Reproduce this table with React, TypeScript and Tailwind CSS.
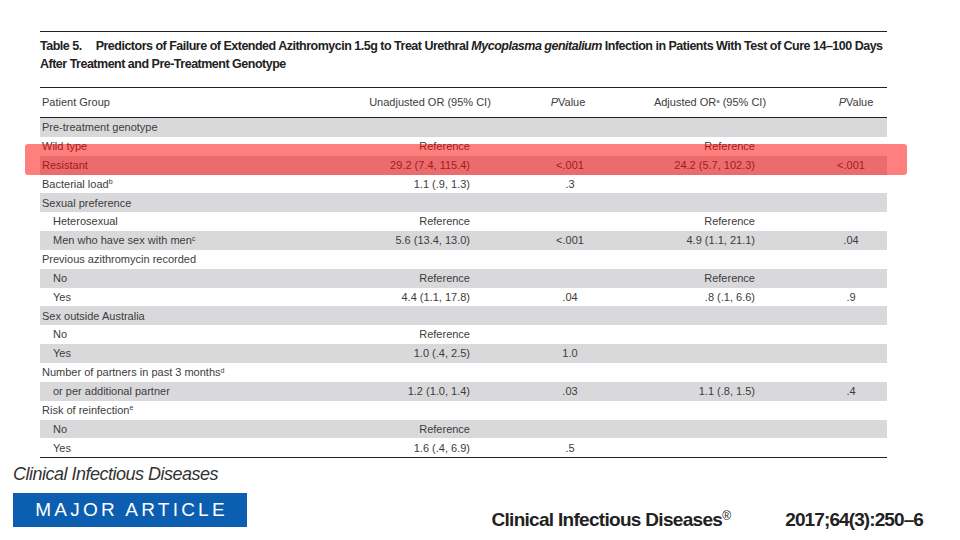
import React from 'react';

type Row = {
  label: React.ReactNode;
  indent?: boolean;
  unadj?: string;
  p1?: string;
  adj?: string;
  p2?: string;
};

const rows: Row[] = [
  { label: 'Pre-treatment genotype' },
  { label: 'Wild type', unadj: 'Reference', adj: 'Reference' },
  { label: 'Resistant', unadj: '29.2 (7.4, 115.4)', p1: '<.001', adj: '24.2 (5.7, 102.3)', p2: '<.001' },
  { label: <>Bacterial load<sup className="text-[7px]">b</sup></>, unadj: '1.1 (.9, 1.3)', p1: '.3' },
  { label: 'Sexual preference' },
  { label: 'Heterosexual', indent: true, unadj: 'Reference', adj: 'Reference' },
  { label: <>Men who have sex with men<sup className="text-[7px]">c</sup></>, indent: true, unadj: '5.6 (13.4, 13.0)', p1: '<.001', adj: '4.9 (1.1, 21.1)', p2: '.04' },
  { label: 'Previous azithromycin recorded' },
  { label: 'No', indent: true, unadj: 'Reference', adj: 'Reference' },
  { label: 'Yes', indent: true, unadj: '4.4 (1.1, 17.8)', p1: '.04', adj: '.8 (.1, 6.6)', p2: '.9' },
  { label: 'Sex outside Australia' },
  { label: 'No', indent: true, unadj: 'Reference' },
  { label: 'Yes', indent: true, unadj: '1.0 (.4, 2.5)', p1: '1.0' },
  { label: <>Number of partners in past 3 months<sup className="text-[7px]">d</sup></> },
  { label: 'or per additional partner', indent: true, unadj: '1.2 (1.0, 1.4)', p1: '.03', adj: '1.1 (.8, 1.5)', p2: '.4' },
  { label: <>Risk of reinfection<sup className="text-[7px]">e</sup></> },
  { label: 'No', indent: true, unadj: 'Reference' },
  { label: 'Yes', indent: true, unadj: '1.6 (.4, 6.9)', p1: '.5' },
];

export default function App() {
  return (
    <div className="relative w-[960px] h-[540px] overflow-hidden bg-white text-[#3c3c3c] font-['Liberation_Sans',Arial,sans-serif]">
      {/* table */}
      <div className="ml-[40px] w-[847px] pt-[31px]">
        <div className="border-t-[1.5px] border-[#222]" />
        <div className="pt-[5px] pb-[14px] text-[12.5px] leading-[18px] font-bold tracking-[-0.5px] text-[#222] whitespace-nowrap">
          <span>Table 5.</span>
          <span className="ml-[14px]">Predictors of Failure of Extended Azithromycin 1.5g to Treat Urethral </span>
          <i>Mycoplasma genitalium</i>
          <span> Infection in Patients With Test of Cure 14–100 Days</span>
          <br />
          After Treatment and Pre-Treatment Genotype
        </div>
        <div className="border-t border-[#222]" />

        {/* header */}
        <div className="grid grid-cols-[325px_130px_33px_80px_204px_13px_62px] h-[29px] items-center text-[11px] whitespace-nowrap">
          <div className="pl-[2px]">Patient Group</div>
          <div className="text-center">Unadjusted OR (95% CI)</div>
          <div />
          <div className="text-center"><i>P</i>Value</div>
          <div className="text-center">Adjusted OR<sup className="text-[6px]">a</sup> (95% CI)</div>
          <div />
          <div className="text-center"><i>P</i>Value</div>
        </div>
        <div className="border-t border-[#222]" />

        {/* body */}
        <div className="flex flex-col">
          {rows.map((r, i) => (
            <div
              key={i}
              className={`grid grid-cols-[340px_90px_200px_85px_60px_72px] h-[18.85px] items-center text-[11px] whitespace-nowrap ${
                i % 2 === 0 ? 'bg-[#d9d9db]' : 'bg-white'
              }`}
            >
              <div className={r.indent ? 'pl-[13px]' : 'pl-[2px]'}>{r.label}</div>
              <div className="text-right">{r.unadj}</div>
              <div className="text-center">{r.p1}</div>
              <div className="text-right">{r.adj}</div>
              <div />
              <div className="text-center">{r.p2}</div>
            </div>
          ))}
        </div>
        <div className="border-t-[1.5px] border-[#222]" />
      </div>

      {/* footer */}
      <div className="flex items-end justify-between">
        <div className="pl-[13px] pt-[5px]">
          <div className="italic text-[18px] leading-[22px] tracking-[-0.5px] text-[#333]">Clinical Infectious Diseases</div>
          <div className="mt-[8px] w-[234px] h-[34px] bg-[#0c5eb0] flex items-center justify-center">
            <span className="text-white text-[19px] tracking-[0.17em] pl-[3px]">MAJOR ARTICLE</span>
          </div>
        </div>
        <div className="flex items-baseline pr-[37px] -mb-[2px] font-bold text-[19px] leading-none tracking-[-0.7px] text-[#222]">
          <span>Clinical Infectious Diseases<sup className="text-[12px] font-normal">®</sup></span>
          <span className="ml-[55px] tracking-[-0.9px]">2017;64(3):250–6</span>
        </div>
      </div>

      {/* highlight overlay */}
      <div className="absolute left-[25px] top-[144px] w-[882px] h-[31px] rounded-[3px] bg-[#ff0000]/50" />
    </div>
  );
}
